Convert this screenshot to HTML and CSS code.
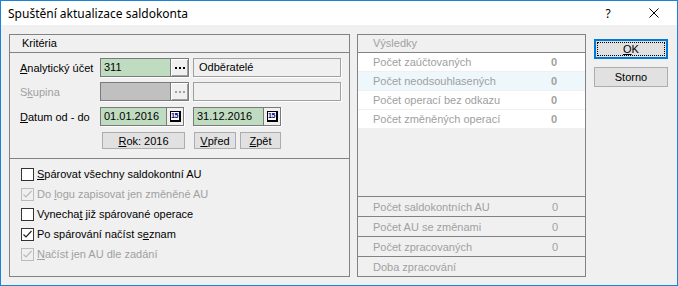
FILE: index.html
```html
<!DOCTYPE html>
<html lang="cs">
<head>
  <meta charset="UTF-8" />
  <title>Spuštění aktualizace saldokonta</title>
  <link rel="stylesheet" href="styles.css">
</head>
<body>
  <div class="window">
    <div class="titlebar">
      <span class="title">Spuštění aktualizace saldokonta</span>
      <span class="tb-btn">?</span>
      <span class="tb-btn">
        <svg width="10" height="10" viewBox="0 0 10 10"><path d="M0.5 0.5L9.5 9.5M9.5 0.5L0.5 9.5" stroke="#000" stroke-width="1" fill="none"/></svg>
      </span>
    </div>

    <div class="content">
      <!-- kriteria -->
      <div class="panel crit">
        <div class="panel-head">Kritéria</div>
        <div class="crit-body">
          <div class="row r1">
            <label><u>A</u>nalytický účet</label>
            <div class="field w89">
              <span class="val green">311</span>
              <span class="dots"><i></i><i></i><i></i></span>
            </div>
            <div class="box">Odběratelé</div>
          </div>
          <div class="row r2">
            <label class="off">S<u>k</u>upina</label>
            <div class="field w89 disabled">
              <span class="val grey"></span>
              <span class="dots"><i></i><i></i><i></i></span>
            </div>
            <div class="box"></div>
          </div>
          <div class="row r3">
            <label><u>D</u>atum od - do</label>
            <div class="field w84">
              <span class="val green">01.01.2016</span>
              <span class="cal"><span class="cal-ico">15</span></span>
            </div>
            <div class="field w88">
              <span class="val green">31.12.2016</span>
              <span class="cal"><span class="cal-ico">15</span></span>
            </div>
          </div>
          <div class="row r4">
            <button type="button" class="btn rok"><u>R</u>ok: 2016</button>
            <button type="button" class="btn vpred"><u>V</u>před</button>
            <button type="button" class="btn zpet"><u>Z</u>pět</button>
          </div>
        </div>

        <div class="checks">
          <div class="chk"><span class="cb"></span><span><u>S</u>párovat všechny saldokontní AU</span></div>
          <div class="chk off"><span class="cb checked"><svg width="11" height="11" viewBox="0 0 11 11"><path d="M1.5 5.5L4 8L9.5 2" stroke="currentColor" stroke-width="1.2" fill="none"/></svg></span><span>Do <u>l</u>ogu zapisovat jen změněné AU</span></div>
          <div class="chk"><span class="cb"></span><span>Vynecha<u>t</u> již spárované operace</span></div>
          <div class="chk"><span class="cb checked"><svg width="11" height="11" viewBox="0 0 11 11"><path d="M1.5 5.5L4 8L9.5 2" stroke="currentColor" stroke-width="1.2" fill="none"/></svg></span><span>Po spárování načíst s<u>e</u>znam</span></div>
          <div class="chk off"><span class="cb checked"><svg width="11" height="11" viewBox="0 0 11 11"><path d="M1.5 5.5L4 8L9.5 2" stroke="currentColor" stroke-width="1.2" fill="none"/></svg></span><span><u>N</u>ačíst jen AU dle zadání</span></div>
        </div>
      </div>

      <!-- vysledky -->
      <div class="panel results">
        <div class="panel-head dim">Výsledky</div>
        <div class="res-list">
          <div class="res"><span>Počet zaúčtovaných</span><b>0</b></div>
          <div class="res alt"><span>Počet neodsouhlasených</span><b>0</b></div>
          <div class="res"><span>Počet operací bez odkazu</span><b>0</b></div>
          <div class="res"><span>Počet změněných operací</span><b>0</b></div>
        </div>
        <div class="spacer"></div>
        <div class="sum">
          <div class="srow"><span>Počet saldokontních AU</span><span>0</span></div>
          <div class="srow"><span>Počet AU se změnami</span><span>0</span></div>
          <div class="srow"><span>Počet zpracovaných</span><span>0</span></div>
          <div class="srow"><span>Doba zpracování</span><span></span></div>
        </div>
      </div>

      <div class="buttons">
        <button type="button" class="dlg-btn ok"><span class="focus"><u>O</u>K</span></button>
        <button type="button" class="dlg-btn">Storno</button>
      </div>
    </div>
  </div>
</body>
</html>
```

FILE: styles.css
```css
* {
  box-sizing: border-box;
}

body {
  margin: 0;
  font-family: "Liberation Sans", Arial, sans-serif;
  font-size: 11px;
  color: #000;
}

.window {
  width: 678px;
  height: 286px;
  border: 1px solid #1883d7;
  background: #f0f0f0;
  display: flex;
  flex-direction: column;
}

.titlebar {
  height: 24px;
  background: #fff;
  display: flex;
  align-items: center;
  padding-left: 7px;
  font-family: "Noto Sans", "Open Sans", sans-serif;
  font-size: 12px;
}

.title {
  flex: 1;
}

.tb-btn {
  width: 46px;
  height: 24px;
  display: flex;
  align-items: center;
  justify-content: center;
}

.content {
  flex: 1;
  display: flex;
  padding: 9px 8px 8px 8px;
}

.panel {
  border: 1px solid #828282;
  height: 243px;
  display: flex;
  flex-direction: column;
}

.panel-head {
  height: 18px;
  line-height: 17px;
  border-bottom: 1px solid #828282;
  padding-left: 12px;
}

.panel-head.dim {
  color: #a0a0a0;
  padding-left: 15px;
}

/* kriteria */
.crit {
  width: 341px;
}

.crit-body {
  height: 106px;
  border-bottom: 1px solid #828282;
  padding: 5px 0 0 10px;
}

.row {
  display: flex;
  align-items: center;
  height: 19px;
}

.r2 { margin-top: 5px; }
.r3 { margin-top: 6px; }
.r4 { margin-top: 6px; height: 17px; }

label {
  width: 80px;
}

label.off {
  color: #a0a0a0;
}

.field {
  display: flex;
  height: 19px;
  border: 1px solid #7a7a7a;
  box-shadow: 1px 1px 0 #fff;
}

.w89 { width: 89px; margin-right: 4px; }
.w84 { width: 84px; margin-right: 9px; }
.w88 { width: 88px; }

.val {
  flex: 1;
  padding-left: 3px;
  line-height: 17px;
}

.green { background: #c0dcc0; }
.grey { background: #c0c0c0; }

.dots {
  width: 18px;
  border-left: 1px solid #7a7a7a;
  background: #f0f0f0;
  box-shadow: inset 1px 1px 0 #fff, inset -1px -1px 0 #a0a0a0;
  display: flex;
  align-items: center;
  justify-content: center;
  gap: 2px;
}

.dots i {
  width: 2px;
  height: 2px;
  background: #000;
}

.disabled .dots i {
  background: #a0a0a0;
}

.cal {
  width: 17px;
  border-left: 1px solid #7a7a7a;
  background: #f0f0f0;
  display: flex;
  align-items: center;
  justify-content: center;
}

.cal-ico {
  width: 11px;
  height: 11px;
  border: 1px solid #000;
  border-right-width: 2px;
  border-bottom-width: 2px;
  background: #fff;
  font-size: 7px;
  font-weight: bold;
  line-height: 8px;
  text-align: center;
  letter-spacing: -0.5px;
  color: #000080;
}

.box {
  width: 148px;
  height: 19px;
  border: 1px solid #a0a0a0;
  box-shadow: 1px 1px 0 #fff;
  padding-left: 5px;
  line-height: 17px;
}

.btn {
  height: 17px;
  padding: 0;
  border: 1px solid #adadad;
  background: #e1e1e1;
  font-family: inherit;
  font-size: 11px;
  color: #000;
}

.rok { width: 83px; margin-left: 82px; }
.vpred { width: 42px; margin-left: 9px; }
.zpet { width: 41px; margin-left: 4px; }

.checks {
  flex: 1;
  padding: 5px 0 0 11px;
}

.chk {
  height: 20px;
  display: flex;
  align-items: center;
  gap: 3px;
}

.cb {
  width: 13px;
  height: 13px;
  border: 1px solid #333;
  background: #fff;
  display: flex;
  align-items: center;
  justify-content: center;
  color: #222;
}

.chk.off {
  color: #a0a0a0;
}

.chk.off .cb {
  border-color: #bcbcbc;
  background: #f0f0f0;
  color: #bcbcbc;
}

/* vysledky */
.results {
  width: 229px;
  margin-left: 7px;
  color: #a0a0a0;
}

.res {
  height: 19px;
  background: #fff;
  border-bottom: 1px solid #f0f0f0;
  display: flex;
  justify-content: space-between;
  align-items: center;
  padding: 0 28px 0 15px;
}

.res.alt {
  background: #eef7fc;
}

.res b {
  font-weight: bold;
}

.spacer {
  flex: 1;
}

.srow {
  height: 20px;
  border-top: 1px solid #828282;
  display: flex;
  justify-content: space-between;
  align-items: center;
  padding: 0 27px 0 15px;
}

/* tlacitka */
.buttons {
  width: 74px;
  margin-left: 8px;
  padding-top: 5px;
  display: flex;
  flex-direction: column;
  gap: 8px;
}

.dlg-btn {
  height: 20px;
  padding: 0;
  border: 1px solid #adadad;
  background: #e1e1e1;
  font-family: inherit;
  font-size: 11px;
  color: #000;
}

.dlg-btn.ok {
  border: 2px solid #0078d7;
  padding: 1px;
}

.focus {
  display: block;
  height: 100%;
  border: 1px dotted #000;
  line-height: 12px;
}
```
